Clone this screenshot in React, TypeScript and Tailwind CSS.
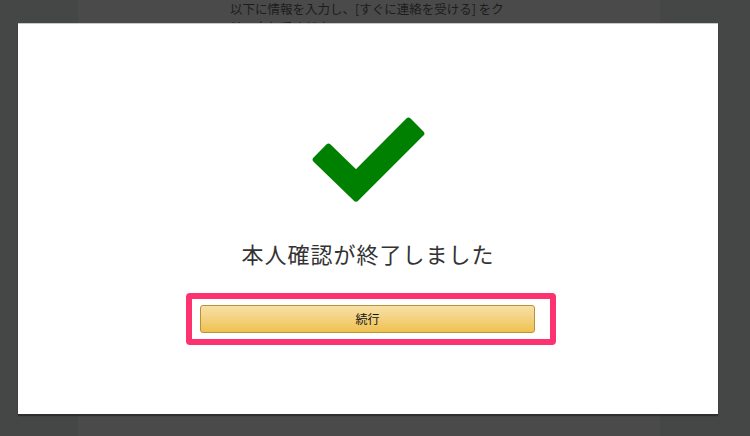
import React from "react";

export default function App() {
  return (
    <div className="relative w-[750px] h-[436px] overflow-hidden" style={{ fontFamily: '"Noto Sans CJK JP", "Noto Sans", sans-serif' }}>
      {/* dimmed background page */}
      <div className="flex h-full">
        <div className="w-[78px] bg-[#454746]" />
        <div className="flex-1 bg-[#4a4a4a] pl-[152px] pt-[0px]">
          <p className="whitespace-nowrap text-[12.5px] leading-[18px] text-[#1c1c1c] pt-[0px]">
            以下に情報を入力し、[すぐに連絡を受ける] をク
            <br />
            リックしてください
          </p>
        </div>
        <div className="w-[90px] bg-[#454746]" />
      </div>

      {/* modal */}
      <div className="absolute left-[18px] top-[23px] w-[700px] h-[391px] bg-white border-t border-[#c8c8c8] shadow-[0_2px_1px_rgba(0,0,0,0.35)] flex flex-col items-center pt-[86px]">
        <svg width="140" height="100" viewBox="0 0 140 100" className="ml-[4px]">
          <polygon
            points="28.5,36.7 56,63.3 108.5,10.7 121.3,23.5 56,88.7 15.7,49.5"
            fill="#008000"
            stroke="#008000"
            strokeWidth="6"
            strokeLinejoin="round"
          />
        </svg>
        <h1 className="mt-[28px] text-[22px] leading-[30px] text-[#333333] tracking-[1px]">
          本人確認が終了しました
        </h1>
        <div className="self-start ml-[168px] mt-[25px] w-[370px] border-[6px] border-[#fd3270] rounded-[4px] pl-[8px] pr-[15px] py-[6px]">
          <button className="w-full h-[28px] rounded-[3px] border border-[#b8913a] bg-gradient-to-b from-[#f7e0a6] to-[#efc24d] text-[12px] text-[#111111] flex items-center justify-center">
            続行
          </button>
        </div>
      </div>
    </div>
  );
}
